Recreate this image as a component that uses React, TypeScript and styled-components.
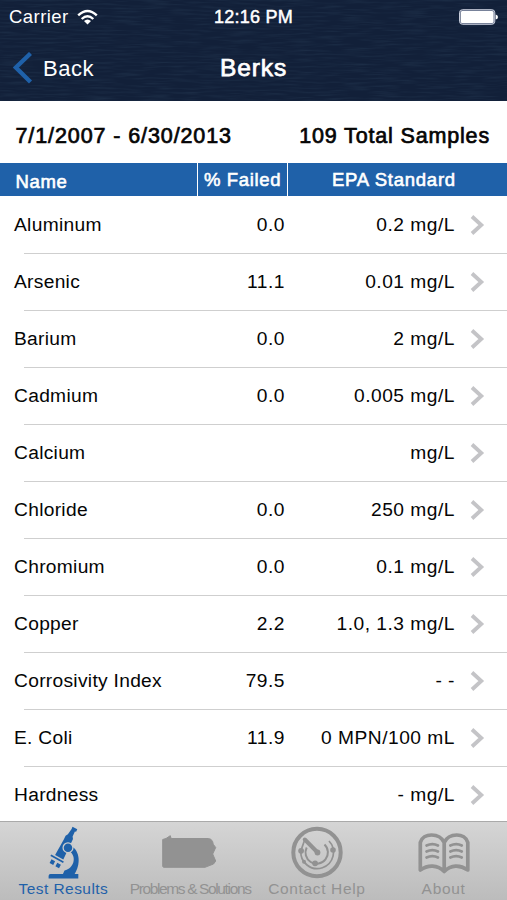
import React from "react";
import styled, { createGlobalStyle } from "styled-components";

const GlobalStyle = createGlobalStyle`
  * { box-sizing: border-box; }
  body {
    margin: 0;
    background: #fff;
    font-family: "Liberation Sans", Arial, sans-serif;
    color: #050505;
  }
`;

const Screen = styled.main`
  width: 507px;
  height: 900px;
  display: flex;
  flex-direction: column;
  overflow: hidden;
  background: #fff;
`;

const Header = styled.header`
  position: relative;
  flex: 0 0 101px;
  display: flex;
  flex-direction: column;
  color: #fff;
  background: #122039;
`;

const Grain = styled.svg`
  position: absolute;
  inset: 0;
  width: 100%;
  height: 100%;
`;

const StatusBar = styled.div`
  position: relative;
  height: 34px;
  display: grid;
  grid-template-columns: 1fr auto 1fr;
  align-items: center;
  padding: 0 9px;
`;

const Carrier = styled.div`
  display: flex;
  align-items: center;
  gap: 8px;
  font-size: 18.5px;
  letter-spacing: 0.45px;
  line-height: 34px;
`;

const Clock = styled.time`
  font-size: 18px;
  letter-spacing: 0.25px;
  -webkit-text-stroke: 0.5px currentColor;
`;

const BatteryIcon = styled.svg`
  justify-self: end;
  display: block;
`;

const NavBar = styled.nav`
  position: relative;
  height: 67px;
  display: grid;
  grid-template-columns: 1fr auto 1fr;
  align-items: center;
  padding: 0 13px;
`;

const BackButton = styled.button`
  display: flex;
  align-items: center;
  gap: 10px;
  padding: 0;
  border: 0;
  background: none;
  color: #fff;
  font: inherit;
  font-size: 22px;
  line-height: 26px;
  letter-spacing: 0.5px;
`;

const BackLabel = styled.span`
  padding-top: 2px;
`;

const Title = styled.h1`
  margin: 0;
  font-size: 24.5px;
  font-weight: 400;
  letter-spacing: 0.9px;
  -webkit-text-stroke: 0.75px currentColor;
`;

const Summary = styled.section`
  flex: 0 0 62px;
  display: flex;
  justify-content: space-between;
  padding: 8px 17px 0 15.5px;
  line-height: 54px;
  font-size: 21.5px;
  -webkit-text-stroke: 0.7px currentColor;
`;

const DateRange = styled.span`
  letter-spacing: 0.9px;
`;

const Total = styled.span`
  letter-spacing: 0.84px;
`;

const TableHead = styled.div`
  flex: 0 0 33px;
  display: grid;
  grid-template-columns: 197px 91px 1fr;
  grid-template-rows: 33px;
  background: #1f61a9;
  color: #fff;
  font-size: 18.5px;
  line-height: 33px;
  letter-spacing: 0.65px;
  -webkit-text-stroke: 0.6px currentColor;
`;

const NameHead = styled.span`
  padding-left: 15.5px;
  line-height: 37px;
`;

const FailedHead = styled.span`
  text-align: center;
  border-left: 1px solid #fff;
  border-right: 1px solid #fff;
`;

const StandardHead = styled.span`
  padding-left: 44px;
  letter-spacing: 0.75px;
`;

const Rows = styled.div`
  flex: 1 1 0;
  min-height: 0;
  padding-top: 1px;
  overflow: hidden;
`;

const Row = styled.div`
  height: 57px;
  display: grid;
  grid-template-columns: 197px 88px 170px 1fr;
  align-items: center;
  padding-bottom: 1px;
  font-size: 19.2px;
  background: linear-gradient(#cfcfcf, #cfcfcf) 24px 100% / 483px 1px no-repeat;
`;

const Name = styled.span`
  padding-left: 14px;
  letter-spacing: 0.3px;
`;

const Value = styled.span`
  text-align: right;
  letter-spacing: 0.5px;
`;

const Disclosure = styled.svg`
  display: block;
  margin: 0 0 0 15px;
`;

const TabBar = styled.nav`
  flex: 0 0 79px;
  display: grid;
  grid-template-columns: repeat(4, 1fr);
  border-top: 1px solid #aaa;
  background: linear-gradient(#d5d5d5, #bcbcbc);
`;

const Tab = styled.button<{ $active?: boolean }>`
  display: flex;
  flex-direction: column;
  align-items: center;
  min-width: 0;
  padding: 2px 0 0;
  border: 0;
  background: none;
  font: inherit;
  color: ${(p) => (p.$active ? "#1f61a9" : "#929292")};
`;

const TabIcon = styled.svg`
  display: block;
  flex: 0 0 56px;
`;

const TabLabel = styled.span<{ $spacing: number }>`
  font-size: 15.5px;
  line-height: 18px;
  white-space: nowrap;
  letter-spacing: ${(p) => p.$spacing}px;
`;

const results = [
  ["Aluminum", "0.0", "0.2 mg/L"],
  ["Arsenic", "11.1", "0.01 mg/L"],
  ["Barium", "0.0", "2 mg/L"],
  ["Cadmium", "0.0", "0.005 mg/L"],
  ["Calcium", "", "mg/L"],
  ["Chloride", "0.0", "250 mg/L"],
  ["Chromium", "0.0", "0.1 mg/L"],
  ["Copper", "2.2", "1.0, 1.3 mg/L"],
  ["Corrosivity Index", "79.5", "- -"],
  ["E. Coli", "11.9", "0 MPN/100 mL"],
  ["Hardness", "", "- mg/L"],
];

const Microscope = () => (
  <TabIcon width="60" height="56" viewBox="0 0 60 56" fill="currentColor">
    <path d="M39.500 2.700l4.800 2.600-1.200 2.400-1.200-.2-2.300 5 .4 2.500-9.700 20.500-8.200-4.500 8.700-15.500 1.800-3.800 2.300-1.500 3.700-5.200z" />
    <path d="M17.800 31.200l12.600 7" stroke="currentColor" strokeWidth="1.700" />
    <path d="M18.500 35.300l3.600 2-1.900 3.600-3.600-2zM24.300 38.700l3.600 2-1.900 3.600-3.600-2z" />
    <path d="M39 22.500C46.500 27 48.500 40 41 51H29.500l2-4.500C41 44.500 43.500 33 37.500 28z" />
    <circle cx="35" cy="23.700" r="4.900" stroke="#cdcdcd" strokeWidth="1.300" />
    <path d="M17.500 50h27.800v4.500H15.600V52q0-2 1.900-2z" />
  </TabIcon>
);

const Pennsylvania = () => (
  <TabIcon width="60" height="56" viewBox="0 0 60 56" fill="currentColor">
    <path d="M2.700 15.500l3.300-1 4.300-2.800.8 2.800h37.400q3 .2 4.200 3.200l.5 2.500 2.500 3.300-3 6.500 3 7-2.200 3-8.500 3.300H4q-1.300 0-1.300-1.300z" stroke="currentColor" strokeLinejoin="round" />
  </TabIcon>
);

const Radar = () => (
  <TabIcon width="60" height="56" viewBox="0 0 60 56" fill="none" stroke="currentColor">
    <circle cx="30" cy="28.500" r="23.700" strokeWidth="4" />
    <path d="M17.800 15.500L14 26.500A16.300 16.300 0 1 0 42 17" strokeWidth="1.700" />
    <path d="M19.700 23.500A11.200 11.200 0 1 0 37.500 20.500" strokeWidth="2" />
    <path d="M17.800 15.500l12.800 13" strokeWidth="4" strokeLinecap="round" />
    <g fill="currentColor" stroke="none">
      <circle cx="30.500" cy="28.500" r="2.900" />
      <circle cx="14.100" cy="26.800" r="2.900" />
      <circle cx="46" cy="26" r="2.800" />
      <circle cx="28.100" cy="39.300" r="2.900" />
      <circle cx="17" cy="37.700" r="2" />
    </g>
  </TabIcon>
);

const Book = () => (
  <TabIcon width="60" height="56" viewBox="0 0 60 56" fill="none" stroke="currentColor">
    <path d="M6.300 46V18.500C9 8.500 25.500 8.500 30.200 18.500 35 8.500 51 8.500 53.800 18.500V46C46 40.500 37 40.500 30.200 47.500 23.500 40.500 14 40.500 6.300 46zM30.200 18v28.500" strokeWidth="3.700" strokeLinejoin="round" />
    <path d="M12.500 21.500q6-2.800 11.500 0M12.500 27.500q6-2.800 11.500 0M12.500 33.500q6-2.800 11.500 0M36.300 21.500q6-2.800 11.500 0M36.300 27.500q6-2.800 11.500 0M36.300 33.500q6-2.800 11.500 0" strokeWidth="2.700" strokeLinecap="round" />
  </TabIcon>
);

export default function App() {
  return (
    <>
      <GlobalStyle />
      <Screen>
        <Header>
          <Grain aria-hidden="true">
            <filter id="grain" x="0" y="0" width="100%" height="100%">
              <feTurbulence type="fractalNoise" baseFrequency="0.035 0.5" numOctaves={2} seed={5} />
              <feColorMatrix values="0 0 0 0 .13  0 0 0 0 .27  0 0 0 0 .39  .8 0 0 0 -.330" />
            </filter>
            <rect width="100%" height="100%" filter="url(#grain)" opacity="0.3" />
          </Grain>
          <StatusBar>
            <Carrier>
              Carrier
              <svg width="21" height="17" viewBox="0 0 21 17" fill="none" stroke="#fff" strokeWidth="2.400">
                <path d="M1.200 6.300Q10.500-2.500 19.800 6.300M4.700 10Q10.500 4.400 16.300 10" />
                <path d="M7 12q3.500-3 7 0l-3.500 3.500z" fill="#fff" stroke="none" />
              </svg>
            </Carrier>
            <Clock>12:16 PM</Clock>
            <BatteryIcon width="40" height="16" viewBox="0 0 40 16">
              <rect x="1.500" y=".7" width="35.300" height="14.600" rx="3" fill="#66718a" stroke="#c9cedc" strokeWidth="1" />
              <rect x="2.800" y="2" width="32.700" height="12" rx="1.500" fill="#fff" />
              <path d="M37.700 5.500q2.300.5 2.300 2.500t-2.300 2.500z" fill="#fff" />
            </BatteryIcon>
          </StatusBar>
          <NavBar>
            <BackButton>
              <svg width="20" height="32" viewBox="0 0 20 32" fill="none" stroke="#1f61a9" strokeWidth="4.300">
                <path d="M17.500 1.500L2.900 15.500l14.600 14.500" />
              </svg>
              <BackLabel>Back</BackLabel>
            </BackButton>
            <Title>Berks</Title>
          </NavBar>
        </Header>
        <Summary>
          <DateRange>7/1/2007 - 6/30/2013</DateRange>
          <Total>109 Total Samples</Total>
        </Summary>
        <TableHead>
          <NameHead>Name</NameHead>
          <FailedHead>% Failed</FailedHead>
          <StandardHead>EPA Standard</StandardHead>
        </TableHead>
        <Rows>
          {results.map(([name, failed, standard]) => (
            <Row key={name}>
              <Name>{name}</Name>
              <Value>{failed}</Value>
              <Value>{standard}</Value>
              <Disclosure width="15" height="20" viewBox="0 0 15 20" fill="none" stroke="#c4c4c7" strokeWidth="3.800">
                <path d="M2 1.500l9.300 8.500L2 18.500" />
              </Disclosure>
            </Row>
          ))}
        </Rows>
        <TabBar>
          <Tab $active>
            <Microscope />
            <TabLabel $spacing={0.45}>Test Results</TabLabel>
          </Tab>
          <Tab>
            <Pennsylvania />
            <TabLabel $spacing={-1.37}>Problems & Solutions</TabLabel>
          </Tab>
          <Tab>
            <Radar />
            <TabLabel $spacing={0.65}>Contact Help</TabLabel>
          </Tab>
          <Tab>
            <Book />
            <TabLabel $spacing={0.7}>About</TabLabel>
          </Tab>
        </TabBar>
      </Screen>
    </>
  );
}
